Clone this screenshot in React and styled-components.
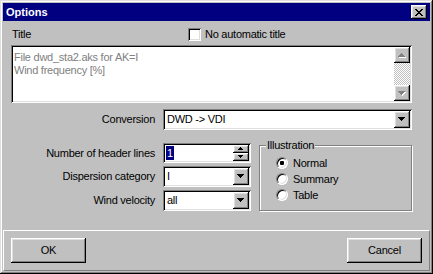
import React from 'react';
import styled, { createGlobalStyle } from 'styled-components';

const GlobalStyle = createGlobalStyle`
  html, body { margin: 0; padding: 0; background: #c0c0c0; }
  body { font-family: "Liberation Sans", Arial, sans-serif; font-size: 11px; }
  * { box-sizing: border-box; }
`;

const raised = `box-shadow: inset -1px -1px #000, inset 1px 1px #fff, inset -2px -2px #808080, inset 2px 2px #dfdfdf;`;
const sunken = `box-shadow: inset 1px 1px #808080, inset -1px -1px #fff, inset 2px 2px #000, inset -2px -2px #dfdfdf;`;

const Window = styled.div`
  width: 433px;
  height: 274px;
  padding: 3px;
  background: #c0c0c0;
  box-shadow: inset -1px -1px #000, inset 1px 1px #dfdfdf, inset -2px -2px #808080, inset 2px 2px #fff;
  display: flex;
  flex-direction: column;
  font-family: "Liberation Sans", Arial, sans-serif;
  font-size: 11px;
  color: #000;
`;

const TitleBar = styled.div`
  height: 18px;
  flex: none;
  background: #000080;
  color: #fff;
  font-weight: bold;
  display: flex;
  align-items: center;
  justify-content: space-between;
  padding: 0 3px 0 3px;
  line-height: 13px;
`;

const CloseButton = styled.div`
  width: 16px;
  height: 14px;
  background: #c0c0c0;
  ${raised}
  display: flex;
  align-items: center;
  justify-content: center;
  padding-right: 1px;
`;

const Content = styled.div`
  flex: 1;
  display: flex;
  flex-direction: column;
  padding: 0 18px 0 8px;
  letter-spacing: -0.25px;
`;

const TitleRow = styled.div`
  margin-top: 7px;
  height: 13px;
  display: grid;
  grid-template-columns: 177px auto;
  align-items: center;
  line-height: 13px;
`;

const PlainLabel = styled.span`
  padding-left: ${p => p.$indent || 0}px;
  white-space: nowrap;
`;

const CheckLabel = styled.div`
  display: flex;
  align-items: center;
  gap: 4px;
`;

const CheckBox = styled.div`
  width: 13px;
  height: 13px;
  background: #fff;
  ${sunken}
`;

const TextBox = styled.div`
  margin-top: 4px;
  height: 58px;
  background: #fff;
  padding: 2px;
  ${sunken}
  display: flex;
`;

const TextLines = styled.div`
  flex: 1;
  padding: 4px 0 0 1px;
  color: #808080;
  line-height: 13px;
`;

const ScrollBar = styled.div`
  width: 16px;
  display: flex;
  flex-direction: column;
`;

const ScrollButton = styled.div`
  width: 16px;
  height: 16px;
  flex: none;
  background: #c0c0c0;
  ${raised}
  display: flex;
  align-items: center;
  justify-content: center;
`;

const ScrollTrack = styled.div`
  flex: 1;
  background: repeating-conic-gradient(#c0c0c0 0% 25%, #fff 0% 50%) 0 0 / 2px 2px;
`;

const FieldRow = styled.div`
  margin-top: ${p => p.$top}px;
  display: grid;
  grid-template-columns: 144px 1fr;
  column-gap: 8px;
  align-items: center;
`;

const FieldLabel = styled.span`
  text-align: right;
  white-space: nowrap;
  line-height: 13px;
`;

const Combo = styled.div`
  height: 21px;
  width: ${p => (p.$width ? `${p.$width}px` : 'auto')};
  background: #fff;
  padding: 2px;
  ${sunken}
  display: flex;
`;

const ComboText = styled.div`
  flex: 1;
  padding-left: 2px;
  line-height: 17px;
  white-space: nowrap;
`;

const DropButton = styled.div`
  width: 16px;
  height: 17px;
  flex: none;
  background: #c0c0c0;
  ${raised}
  display: flex;
  align-items: center;
  justify-content: center;
`;

const Lower = styled.div`
  margin-top: 13px;
  display: flex;
  gap: 8px;
  align-items: flex-start;
`;

const LeftGrid = styled.div`
  display: grid;
  grid-template-columns: 144px 88px;
  grid-template-rows: 20px 21px 21px;
  column-gap: 8px;
  row-gap: 3px;
  align-items: center;
`;

const SpinBox = styled.div`
  height: 20px;
  background: #fff;
  padding: 2px;
  ${sunken}
  display: flex;
`;

const SpinText = styled.div`
  flex: 1;
  padding-left: 1px;
  display: flex;
  align-items: center;
`;

const Selected = styled.span`
  background: #000080;
  color: #fff;
  line-height: 14px;
  padding: 0 1px;
`;

const SpinButtons = styled.div`
  width: 16px;
  display: flex;
  flex-direction: column;
`;

const SpinButton = styled.div`
  flex: 1;
  background: #c0c0c0;
  ${raised}
  display: flex;
  align-items: center;
  justify-content: center;
`;

const Group = styled.div`
  position: relative;
  margin-top: 2px;
  width: 153px;
  height: 66px;
  border: 1px solid #808080;
  box-shadow: 1px 1px 0 #fff, inset 1px 1px 0 #fff;
  padding: 9px 0 0 16px;
`;

const Legend = styled.span`
  position: absolute;
  top: -6px;
  left: 6px;
  padding: 0 1px;
  background: #c0c0c0;
  line-height: 11px;
`;

const RadioRow = styled.div`
  height: 16px;
  display: flex;
  align-items: center;
  gap: 5px;
  line-height: 13px;
`;

const RadioCircle = styled.div`
  width: 12px;
  height: 12px;
  border-radius: 50%;
  background: #fff;
  border: 1px solid;
  border-color: #808080 #fff #fff #808080;
  box-shadow: inset 1px 1px #000, inset -1px -1px #dfdfdf;
  display: flex;
  align-items: center;
  justify-content: center;
`;

const RadioDot = styled.div`
  width: 4px;
  height: 4px;
  border-radius: 1px;
  background: #000;
`;

const ButtonPanel = styled.div`
  height: 41px;
  flex: none;
  border-top: 1px solid #fff;
  border-left: 1px solid #fff;
  border-right: 1px solid #808080;
  border-bottom: 1px solid #808080;
  padding: 7px;
  display: flex;
  justify-content: space-between;
  align-items: flex-start;
`;

const PushButton = styled.div`
  width: 75px;
  height: 25px;
  background: #c0c0c0;
  ${raised}
  display: flex;
  align-items: center;
  justify-content: center;
  line-height: 13px;
  letter-spacing: -0.2px;
`;

const ARROWS = {
  up7: { w: 7, h: 4, d: 'M3 0h1v1H3z M2 1h3v1H2z M1 2h5v1H1z M0 3h7v1H0z' },
  down7: { w: 7, h: 4, d: 'M0 0h7v1H0z M1 1h5v1H1z M2 2h3v1H2z M3 3h1v1H3z' },
  up5: { w: 5, h: 3, d: 'M2 0h1v1H2z M1 1h3v1H1z M0 2h5v1H0z' },
  down5: { w: 5, h: 3, d: 'M0 0h5v1H0z M1 1h3v1H1z M2 2h1v1H2z' },
};

function Arrow({ kind, disabled }) {
  const a = ARROWS[kind];
  return (
    <svg width={a.w + 1} height={a.h + 1} viewBox={`0 0 ${a.w + 1} ${a.h + 1}`} shapeRendering="crispEdges">
      {disabled && <path d={a.d} fill="#fff" transform="translate(1 1)" />}
      <path d={a.d} fill={disabled ? '#808080' : '#000'} />
    </svg>
  );
}

function CloseGlyph() {
  return (
    <svg width="8" height="7" viewBox="0 0 8 7" shapeRendering="crispEdges">
      <path
        fill="#000"
        d="M0 0h2v1H0z M6 0h2v1H6z M1 1h2v1H1z M5 1h2v1H5z M2 2h4v1H2z M3 3h2v1H3z M2 4h4v1H2z M1 5h2v1H1z M5 5h2v1H5z M0 6h2v1H0z M6 6h2v1H6z"
      />
    </svg>
  );
}

function ComboBox({ value, width }) {
  return (
    <Combo $width={width}>
      <ComboText>{value}</ComboText>
      <DropButton>
        <Arrow kind="down7" />
      </DropButton>
    </Combo>
  );
}

function Radio({ label, checked }) {
  return (
    <RadioRow>
      <RadioCircle>{checked && <RadioDot />}</RadioCircle>
      <span>{label}</span>
    </RadioRow>
  );
}

export default function App() {
  return (
    <>
      <GlobalStyle />
      <Window>
        <TitleBar>
          <span>Options</span>
          <CloseButton>
            <CloseGlyph />
          </CloseButton>
        </TitleBar>
        <Content>
          <TitleRow>
            <PlainLabel $indent={1}>Title</PlainLabel>
            <CheckLabel>
              <CheckBox />
              <span>No automatic title</span>
            </CheckLabel>
          </TitleRow>
          <TextBox>
            <TextLines>
              <div>File dwd_sta2.aks for AK=I</div>
              <div>Wind frequency [%]</div>
            </TextLines>
            <ScrollBar>
              <ScrollButton>
                <Arrow kind="up7" disabled />
              </ScrollButton>
              <ScrollTrack />
              <ScrollButton>
                <Arrow kind="down7" disabled />
              </ScrollButton>
            </ScrollBar>
          </TextBox>
          <FieldRow $top={6}>
            <FieldLabel>Conversion</FieldLabel>
            <ComboBox value="DWD -> VDI" />
          </FieldRow>
          <Lower>
            <LeftGrid>
              <FieldLabel>Number of header lines</FieldLabel>
              <SpinBox>
                <SpinText>
                  <Selected>1</Selected>
                </SpinText>
                <SpinButtons>
                  <SpinButton>
                    <Arrow kind="up5" />
                  </SpinButton>
                  <SpinButton>
                    <Arrow kind="down5" />
                  </SpinButton>
                </SpinButtons>
              </SpinBox>
              <FieldLabel>Dispersion category</FieldLabel>
              <ComboBox value="I" />
              <FieldLabel>Wind velocity</FieldLabel>
              <ComboBox value="all" />
            </LeftGrid>
            <Group>
              <Legend>Illustration</Legend>
              <Radio label="Normal" checked />
              <Radio label="Summary" />
              <Radio label="Table" />
            </Group>
          </Lower>
        </Content>
        <ButtonPanel>
          <PushButton>OK</PushButton>
          <PushButton>Cancel</PushButton>
        </ButtonPanel>
      </Window>
    </>
  );
}
